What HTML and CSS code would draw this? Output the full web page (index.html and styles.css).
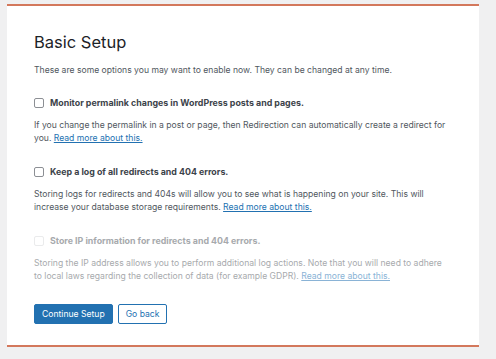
FILE: index.html
```html
<!DOCTYPE html>
<html lang="en">
<head>
    <meta charset="UTF-8">
    <meta name="viewport" content="width=device-width, initial-scale=1.0">
    <title>Basic Setup</title>

    <link rel="stylesheet" href="styles.css">
</head>
<body>
    <div class="wizard">
        <h2 class="title">Basic Setup</h2>
        <p class="intro">These are some options you may want to enable now. They can be changed at any time.</p>

        <div class="option">
            <label class="check"><input type="checkbox"> Monitor permalink changes in WordPress posts and pages.</label>
            <p class="desc">If you change the permalink in a post or page, then Redirection can automatically create a redirect for you. <a href="#">Read more about this.</a></p>
        </div>

        <div class="option">
            <label class="check"><input type="checkbox"> Keep a log of all redirects and 404 errors.</label>
            <p class="desc">Storing logs for redirects and 404s will allow you to see what is happening on your site. This will increase your database storage requirements. <a href="#">Read more about this.</a></p>
        </div>

        <div class="option disabled">
            <label class="check"><input type="checkbox" disabled> Store IP information for redirects and 404 errors.</label>
            <p class="desc">Storing the IP address allows you to perform additional log actions. Note that you will need to adhere to local laws regarding the collection of data (for example GDPR). <a href="#">Read more about this.</a></p>
        </div>

        <div class="actions">
            <button class="btn primary">Continue Setup</button>
            <button class="btn">Go back</button>
        </div>
    </div>
</body>
</html>
```

FILE: styles.css
```css
*, *:before, *:after{
    margin: 0;
    padding: 0;
    box-sizing: border-box;
}
body{
    background: #f0f0f1;
    padding: 4px 17px 0 7px;
    font-family: Inter, "Liberation Sans", sans-serif;
    font-size: 8.6px;
    color: #50575e;
}
.wizard{
    width: 472px;
    background: #fff;
    border-top: 2px solid #d3785c;
    border-bottom: 2px solid #d3785c;
    padding: 26px 27px 21px 27px;
}
.title{
    font-size: 16.5px;
    font-weight: 400;
    color: #1d2327;
    line-height: 20px;
}
.intro{
    margin-top: 12px;
    line-height: 13px;
}
.option{
    margin-top: 20px;
}
.option + .option{
    margin-top: 21px;
}
.check{
    display: flex;
    align-items: center;
    gap: 6px;
    font-size: 8.85px;
    font-weight: 700;
    color: #3c434a;
    line-height: 12px;
}
.check input{
    appearance: none;
    width: 10px;
    height: 10px;
    border: 1px solid #8c8f94;
    border-radius: 2px;
    background: #fff;
}
.desc{
    margin-top: 10px;
    line-height: 13px;
    width: 418px;
}
.desc a{
    color: #2271b1;
}
.disabled .check{
    color: #a7aaad;
}
.disabled .check input{
    border-color: #eaebec;
}
.disabled .desc{
    color: #a7aaad;
}
.disabled .desc a{
    color: #8ab3d6;
}
.actions{
    margin-top: 21px;
    display: flex;
    gap: 5px;
}
.btn{
    height: 20px;
    padding: 0 7px;
    font-family: inherit;
    font-size: 8.6px;
    border: 1px solid #2271b1;
    border-radius: 2px;
    background: #fff;
    color: #2271b1;
}
.primary{
    background: #2271b1;
    color: #fff;
}
```
